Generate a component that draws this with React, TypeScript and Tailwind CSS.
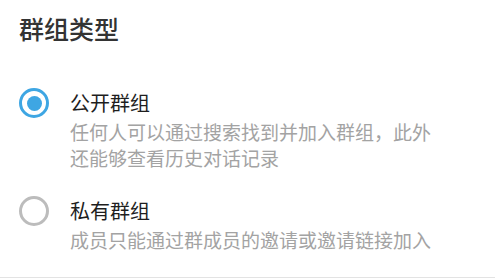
export default function App() {
  const options = [
    {
      label: "公开群组",
      desc: "任何人可以通过搜索找到并加入群组，此外还能够查看历史对话记录",
      checked: true,
    },
    {
      label: "私有群组",
      desc: "成员只能通过群成员的邀请或邀请链接加入",
      checked: false,
    },
  ];

  return (
    <div
      className="h-[278px] w-[495px] border-b border-[#e3e3e3] bg-white pl-[19px]"
      style={{ fontFamily: '"Noto Sans CJK SC", "Noto Sans", sans-serif' }}
    >
      <h2 className="pt-[12px] text-[25px] font-medium leading-[32px] text-[#333333]">群组类型</h2>

      <div className="mt-[44px] flex flex-col gap-[25px]">
        {options.map((o) => (
          <div key={o.label} className="flex">
            <div className="flex h-[30px] w-[30px] shrink-0 items-center justify-center">
              {o.checked ? (
                <span className="flex h-[30px] w-[30px] items-center justify-center rounded-full border-[3px] border-[#3ea6e3]">
                  <span className="h-[15px] w-[15px] rounded-full bg-[#3ea6e3]" />
                </span>
              ) : (
                <span className="h-[30px] w-[30px] rounded-full border-[3px] border-[#bcbcbc]" />
              )}
            </div>
            <div className="ml-[21px] w-[372px]">
              <div className="text-[20px] leading-[30px] text-[#1e1e1e]">{o.label}</div>
              <p className="mt-[1px] text-[19px] leading-[26px] text-[#a3a3a3]">{o.desc}</p>
            </div>
          </div>
        ))}
      </div>
    </div>
  );
}
